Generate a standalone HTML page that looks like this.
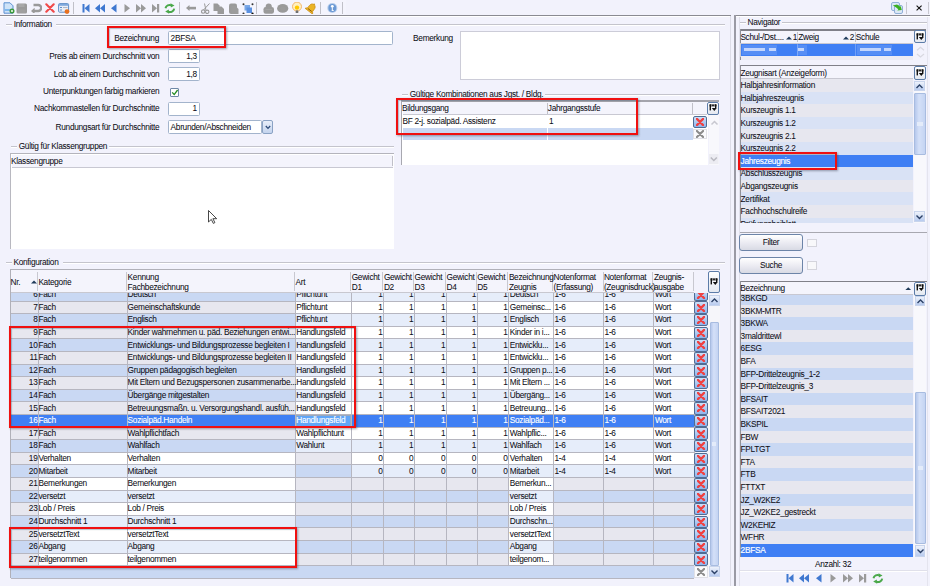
<!DOCTYPE html><html><head><meta charset="utf-8"><style>
html,body{margin:0;padding:0}body{width:930px;height:586px;overflow:hidden;position:relative;background:#f2f2fc;font-family:"Liberation Sans",sans-serif;font-size:8px;color:#0c0c14}
div,svg{position:absolute}.t{white-space:nowrap;line-height:12.6px;height:12.6px;letter-spacing:-0.3px;font-size:8.3px;-webkit-text-stroke:0.04px #141420}.w{-webkit-text-stroke:0.2px #fff}
</style></head><body>
<div style="left:0px;top:0px;width:930px;height:15px;background:#f2f2fc"></div>
<div style="left:0px;top:0px;width:346px;height:14.5px;background:#f4f4fd"></div>
<svg style="position:absolute;left:2.5px;top:2px" width="12" height="12" viewBox="0 0 12 12"><path d="M1 .8h6l3 3v7.4H1z" fill="#cfe3f8" stroke="#5b8fd0" stroke-width="1"/><rect x="1.5" y="7" width="8" height="2" fill="#7fb8ee"/><circle cx="9" cy="9" r="2.5" fill="#3c9a3c"/><circle cx="9" cy="9" r="1.1" fill="#e8f8e8"/></svg>
<svg style="position:absolute;left:16px;top:2.5px" width="12" height="11" viewBox="0 0 12 11"><rect x=".5" y=".5" width="10.5" height="10" rx="1.5" fill="#9a9a9a"/><rect x="2.5" y="1" width="6" height="3" fill="#a8a8a8"/><rect x="2" y="6.5" width="7.5" height="3.5" fill="#a0a0a0"/></svg>
<svg style="position:absolute;left:31px;top:3px" width="11" height="10" viewBox="0 0 11 10"><path d="M3 8h4.2a3 3 0 0 0 0-6H2.5" fill="none" stroke="#9a9a9a" stroke-width="2.4"/><path d="M0 8l3.6-3.2v6.4z" fill="#9a9a9a"/></svg>
<svg style="position:absolute;left:45px;top:3px" width="10" height="10" viewBox="0 0 10 10"><path d="M1.3 1.3l7.4 7.4M8.7 1.3l-7.4 7.4" stroke="#f04a4a" stroke-width="2.1" stroke-linecap="round"/></svg>
<svg style="position:absolute;left:58px;top:3px" width="12" height="11" viewBox="0 0 12 11"><rect x=".6" y=".6" width="10" height="8.6" rx="1" fill="#e8eef8" stroke="#5f8fc8" stroke-width="1"/><rect x="1" y="1" width="9.4" height="1.8" fill="#7fa8dc"/><rect x="2" y="4" width="2" height="1" fill="#5f8fc8"/><rect x="2" y="6.5" width="2" height="1" fill="#5f8fc8"/><rect x="5" y="4" width="4.5" height="1" fill="#b0b8c8"/><circle cx="9" cy="8.6" r="2.4" fill="#e8701e"/></svg>
<div style="left:73.2px;top:2px;width:1px;height:11.5px;background:#c0c0c8"></div>
<svg style="position:absolute;left:81.5px;top:3.5px" width="8" height="9" viewBox="0 0 8 9"><rect x=".5" y="0" width="2" height="8.5" fill="#3f78d0"/><path d="M7.5 0v8.5L2.5 4.25z" fill="#3f78d0"/></svg>
<svg style="position:absolute;left:94.5px;top:3.5px" width="10.5" height="9" viewBox="0 0 10.5 9"><path d="M5 0v8.5L0 4.25z M10 0v8.5L5 4.25z" fill="#3f78d0"/></svg>
<svg style="position:absolute;left:110.5px;top:3.5px" width="6" height="9" viewBox="0 0 6 9"><path d="M5.5 0v8.5L0 4.25z" fill="#3f78d0"/></svg>
<svg style="position:absolute;left:124px;top:3.5px" width="6.5" height="9" viewBox="0 0 6.5 9"><path d="M.5 0v8.5L6 4.25z" fill="#9a9a9a"/></svg>
<svg style="position:absolute;left:136px;top:3.5px" width="10.5" height="9" viewBox="0 0 10.5 9"><path d="M0 0v8.5L5 4.25z M5 0v8.5l5-4.25z" fill="#9a9a9a"/></svg>
<svg style="position:absolute;left:151.5px;top:3.5px" width="8" height="9" viewBox="0 0 8 9"><path d="M0 0v8.5L5 4.25z" fill="#9a9a9a"/><rect x="5" y="0" width="2.2" height="8.5" fill="#9a9a9a"/></svg>
<svg style="position:absolute;left:163.5px;top:2.5px" width="12" height="11" viewBox="0 0 12 11"><path d="M1.5 5.2C2 2.5 5 1.2 7.5 2.4" fill="none" stroke="#4aa84a" stroke-width="2"/><path d="M6.5 0.2l4 2.2-3.6 2z" fill="#4aa84a"/><path d="M10.2 5.6C9.8 8.4 6.8 9.8 4.2 8.6" fill="none" stroke="#4aa84a" stroke-width="2"/><path d="M5.2 10.8l-4-2.2 3.6-2z" fill="#4aa84a"/></svg>
<div style="left:178.5px;top:2px;width:1px;height:11.5px;background:#c0c0c8"></div>
<svg style="position:absolute;left:186px;top:4.5px" width="10" height="6" viewBox="0 0 10 6"><path d="M0 3l3.5-3v6z" fill="#9a9a9a"/><rect x="3" y="1.8" width="7" height="2.6" fill="#9a9a9a"/></svg>
<svg style="position:absolute;left:200.5px;top:2.5px" width="9.5" height="11" viewBox="0 0 9.5 11"><path d="M2.5 7L8.5.5M5 7.5L3.5 .5" stroke="#9a9a9a" stroke-width="1" fill="none"/><circle cx="2.2" cy="8.6" r="1.7" fill="none" stroke="#9a9a9a" stroke-width="1.1"/><circle cx="6.2" cy="8.8" r="1.7" fill="none" stroke="#9a9a9a" stroke-width="1.1"/></svg>
<svg style="position:absolute;left:213px;top:2.5px" width="12" height="11.5" viewBox="0 0 12 11.5"><path d="M.5 .5h4l2 2V8H.5z" fill="#9a9a9a"/><path d="M4.5 3.5h4l2.5 2.5v5H4.5z" fill="#9a9a9a"/></svg>
<svg style="position:absolute;left:227.5px;top:2.5px" width="11.5" height="11.5" viewBox="0 0 11.5 11.5"><rect x="1" y="0.5" width="8" height="10.5" rx="2" fill="#9a9a9a"/><path d="M3.5 3h4l3 3v5h-7z" fill="#9c9c9c"/></svg>
<svg style="position:absolute;left:241.5px;top:2.5px" width="12" height="11.5" viewBox="0 0 12 11.5"><rect x="2.5" y="2" width="5.5" height="5.5" fill="#7aa8e8"/><rect x="4.5" y="4.5" width="5.5" height="5.5" fill="#5a90e0"/><circle cx="1.5" cy="1.2" r="1" fill="#333"/><circle cx="10.5" cy="1.2" r="1" fill="#333"/><circle cx="1.5" cy="10.5" r="1" fill="#333"/><circle cx="10.5" cy="10.5" r="1.1" fill="#111"/></svg>
<div style="left:256.3px;top:2px;width:1px;height:11.5px;background:#c0c0c8"></div>
<svg style="position:absolute;left:263px;top:2.5px" width="11.5" height="11.5" viewBox="0 0 11.5 11.5"><path d="M2.6 4.2C2.6 1.2 3.8.4 5.7.4s3.2.8 3.2 3.8z" fill="#9a9a9a"/><rect x=".5" y="4" width="10.5" height="6.8" rx="2.2" fill="#9a9a9a"/><rect x="2.5" y="6" width="6.5" height="1" fill="#a4a4a4"/></svg>
<svg style="position:absolute;left:277px;top:3.5px" width="12" height="9.5" viewBox="0 0 12 9.5"><ellipse cx="5.7" cy="4.4" rx="5.6" ry="4.3" fill="#9a9a9a"/><ellipse cx="5.7" cy="4.4" rx="2.6" ry="2" fill="#9c9c9c"/></svg>
<svg style="position:absolute;left:291.5px;top:2px" width="11" height="11.5" viewBox="0 0 11 11.5"><circle cx="5" cy="4.6" r="4.5" fill="#fff0c0" stroke="#f2b060" stroke-width=".9"/><circle cx="5" cy="5.6" r="2.2" fill="#ffc800"/><rect x="3.7" y="8.4" width="2.6" height="2.6" fill="#707070"/></svg>
<svg style="position:absolute;left:304.5px;top:1.5px" width="12" height="12.5" viewBox="0 0 12 12.5"><g transform="rotate(38 6 6.5)"><path d="M6 1.6c-2.1 0-3.1 1.7-3.1 3.8v2.5L1.2 10h9.6L9.1 7.9V5.4c0-2.1-1-3.8-3.1-3.8z" fill="#ebb424" stroke="#c98c12" stroke-width=".7"/><circle cx="6" cy="1.3" r=".9" fill="#d9a020"/><path d="M3.6 8.4h4.8" stroke="#8a5a10" stroke-width=".9"/></g></svg>
<div style="left:320.1px;top:2px;width:1px;height:11.5px;background:#c0c0c8"></div>
<svg style="position:absolute;left:327px;top:3px" width="11" height="10.5" viewBox="0 0 11 10.5"><circle cx="5.3" cy="5" r="5" fill="#b4cbea"/><circle cx="5.3" cy="5" r="3.9" fill="#6a98d4"/><circle cx="5.3" cy="3.3" r="1.4" fill="#fff"/><rect x="4.8" y="4.3" width="1" height="3.6" fill="#fff"/><rect x="4.8" y="7" width="2" height=".8" fill="#fff"/></svg>
<div style="left:341.6px;top:2px;width:1px;height:11.5px;background:#c0c0c8"></div>
<svg style="position:absolute;left:891px;top:2px" width="12.5" height="12" viewBox="0 0 12.5 12"><rect x=".5" y=".5" width="8" height="8" rx="1.5" fill="#dce8f6" stroke="#90b0d8" stroke-width="1"/><rect x="3.5" y="3.5" width="8" height="8" rx="1.5" fill="#dce8f6" stroke="#90b0d8" stroke-width="1"/><path d="M1.8 3.6l4.2-1.2 3.4 2.4.2-1.4 1.2 4.6-4.6.6 1.2-1C5.8 5.6 3.8 4.8 1.8 3.6z" fill="#3ab020"/></svg>
<div style="left:906px;top:2px;width:1px;height:11.5px;background:#c8c8d0"></div>
<svg style="position:absolute;left:915.5px;top:4.8px" width="6.5" height="6" viewBox="0 0 6.5 6"><path d="M.6.6l5 4.8M5.6.6l-5 4.8" stroke="#111" stroke-width="1.1"/></svg>
<div style="left:928px;top:2px;width:1px;height:11.5px;background:#c8c8d0"></div>
<div style="left:0px;top:14.8px;width:731px;height:1.2px;background:#8a8a92"></div>
<div style="left:0px;top:16px;width:731px;height:1px;background:#ffffff"></div>
<div style="left:735px;top:14.8px;width:195px;height:1.2px;background:#8a8a92"></div>
<div style="left:735px;top:16px;width:195px;height:1px;background:#ffffff"></div>
<div style="left:729.5px;top:16px;width:1px;height:570px;background:#dcdce6"></div>
<div style="left:734.4px;top:14.8px;width:1.5px;height:571.2px;background:#9a9aa4"></div>
<div style="left:738.6px;top:17px;width:1px;height:569px;background:#e0e0ea"></div>
<div style="left:6px;top:24.2px;width:6.2px;height:1px;background:#c4c4cc"></div>
<div style="left:6px;top:25.2px;width:6.2px;height:1px;background:#ffffff"></div>
<div style="left:56px;top:24.2px;width:669px;height:1px;background:#c4c4cc"></div>
<div style="left:56px;top:25.2px;width:669px;height:1px;background:#ffffff"></div>
<div class="t" style="left:13.7px;top:18.2px;">Information</div>
<div class="t" style="right:771px;top:32.1px;text-align:right;">Bezeichnung</div>
<div style="left:168px;top:31.2px;width:225.3px;height:13.6px;background:#fff;border:1px solid #a3b4cc;box-sizing:border-box;border-radius:1.5px"></div>
<div class="t" style="left:170.6px;top:31.9px;">2BFSA</div>
<div class="t" style="right:770.6px;top:50.2px;text-align:right;">Preis ab einem Durchschnitt von</div>
<div style="left:168.2px;top:49.4px;width:31.6px;height:13.4px;background:#fff;border:1px solid #a3b4cc;box-sizing:border-box;border-radius:1.5px"></div>
<div class="t" style="right:733.2px;top:50px;text-align:right;">1,3</div>
<div class="t" style="right:770.6px;top:68.1px;text-align:right;">Lob ab einem Durchschnitt von</div>
<div style="left:168.2px;top:67.2px;width:31.6px;height:14px;background:#fff;border:1px solid #a3b4cc;box-sizing:border-box;border-radius:1.5px"></div>
<div class="t" style="right:733.2px;top:68.1px;text-align:right;">1,8</div>
<div class="t" style="right:770.6px;top:85.3px;text-align:right;">Unterpunktungen farbig markieren</div>
<div style="left:170px;top:87.5px;width:9.2px;height:9px;background:#fff;border:1px solid #6f88a8;box-sizing:border-box;border-radius:1px"></div>
<svg style="position:absolute;left:171px;top:88.5px" width="7.5" height="7" viewBox="0 0 7.5 7"><path d="M1.2 3.4l2 2.2 3.4-4.6" fill="none" stroke="#1f8a1f" stroke-width="1.3"/></svg>
<div class="t" style="right:770.6px;top:102.4px;text-align:right;">Nachkommastellen für Durchschnitte</div>
<div style="left:168.2px;top:101.5px;width:31.6px;height:14px;background:#fff;border:1px solid #a3b4cc;box-sizing:border-box;border-radius:1.5px"></div>
<div class="t" style="right:733.2px;top:102.4px;text-align:right;">1</div>
<div class="t" style="right:770.6px;top:120.5px;text-align:right;">Rundungsart für Durchschnitte</div>
<div style="left:168px;top:119.9px;width:94.4px;height:14.3px;background:#fff;border:1px solid #a3b4cc;box-sizing:border-box;border-radius:1.5px"></div>
<div class="t" style="left:170.6px;top:120.95px;">Abrunden/Abschneiden</div>
<div style="left:262.2px;top:120px;width:10.4px;height:14px;background:linear-gradient(#e8eef9,#c4d4ee);border:1px solid #8aa2c4;box-sizing:border-box;border-radius:2px"></div>
<svg style="position:absolute;left:264.6px;top:124.6px" width="6" height="5" viewBox="0 0 6 5"><path d="M.8 1l2.2 2.4L5.2 1" fill="none" stroke="#2c4a78" stroke-width="1.3"/></svg>
<div style="left:106.8px;top:25.6px;width:118.8px;height:22.4px;border:2px solid #f01010;box-sizing:border-box;box-shadow:1px 1px 2px rgba(60,60,80,.45), inset 1px 1px 1px rgba(60,90,110,.35)"></div>
<div class="t" style="left:413.1px;top:32.2px;">Bemerkung</div>
<div style="left:459.6px;top:31px;width:260px;height:48.8px;background:#fff;border:1px solid #ccccd8;box-sizing:border-box"></div>
<div style="left:401.9px;top:94.2px;width:6.3px;height:1px;background:#c4c4cc"></div>
<div style="left:401.9px;top:95.2px;width:6.3px;height:1px;background:#ffffff"></div>
<div style="left:545.3px;top:94.2px;width:174.5px;height:1px;background:#c4c4cc"></div>
<div style="left:545.3px;top:95.2px;width:174.5px;height:1px;background:#ffffff"></div>
<div class="t" style="left:409.7px;top:88.2px;">Gültige Kombinationen aus Jgst. / Bldg.</div>
<div style="left:401px;top:100.5px;width:307px;height:64.3px;background:#fff"></div>
<div style="left:401px;top:100.4px;width:317.5px;height:1.2px;background:#a4a4ac"></div>
<div style="left:401px;top:100.5px;width:1.3px;height:64.3px;background:#a8a8b0"></div>
<div style="left:402.5px;top:101.8px;width:304.5px;height:12.6px;background:#f4f4fc"></div>
<div style="left:402.5px;top:114px;width:304.5px;height:1px;background:#c8c8d2"></div>
<div style="left:546.6px;top:103px;width:1px;height:10.5px;background:#c0c0c8"></div>
<div style="left:692.3px;top:103px;width:1px;height:10.5px;background:#c0c0c8"></div>
<div class="t" style="left:402px;top:102.4px;">Bildungsgang</div>
<div class="t" style="left:547.8px;top:102.4px;">Jahrgangsstufe</div>
<div class="t" style="left:402.5px;top:115.3px;">BF 2-j. sozialpäd. Assistenz</div>
<div class="t" style="left:549px;top:115.3px;">1</div>
<div style="left:402.5px;top:128.1px;width:290.5px;height:11.9px;background:#c9d8f3"></div>
<div style="left:546.6px;top:128.1px;width:1px;height:11.9px;background:#ffffff"></div>
<div style="left:708.6px;top:115px;width:10.9px;height:49.8px;background:#f8f8fc"></div>
<svg style="position:absolute;left:709.5px;top:118.7px" width="9" height="8" viewBox="0 0 9 8"><path d="M1.5 5.5l3-3 3 3" fill="none" stroke="#c8c8d0" stroke-width="1.5"/></svg>
<svg style="position:absolute;left:709px;top:153.5px" width="9.5" height="10" viewBox="0 0 9.5 10"><rect x="0" y="0" width="9.5" height="10" fill="#ececf2"/><path d="M1.8 3.5l3 3 3-3" fill="none" stroke="#b8b8c0" stroke-width="1.5"/></svg>
<div style="left:707.3px;top:101.8px;width:11.6px;height:13.2px;background:linear-gradient(#ffffff,#e4e8f0);border:1.2px solid #5c7ca8;box-sizing:border-box;border-radius:2px"></div>
<svg style="position:absolute;left:709.1px;top:104.1px" width="8" height="8" viewBox="0 0 8 8"><rect x=".6" y=".4" width="6.8" height="2" fill="#111"/><rect x="2.5" y=".4" width=".6" height="2" fill="#eee"/><rect x="4.9" y=".4" width=".6" height="2" fill="#eee"/><rect x=".6" y=".4" width="1.4" height="6" fill="#111"/><rect x="6" y=".4" width="1.4" height="3.6" fill="#111"/><path d="M2.8 4h5L5.3 7z" fill="#111"/></svg>
<div style="left:693.3px;top:115.6px;width:13.5px;height:12px;background:linear-gradient(#cfe0f8,#8eb4ec);border:1.2px solid #4f6c94;box-sizing:border-box;border-radius:2px"></div>
<svg style="position:absolute;left:696.05px;top:117.6px" width="8" height="8" viewBox="0 0 8 8"><path d="M.9 .9l6.2 6.2M7.1 .9l-6.2 6.2" stroke="#f04040" stroke-width="2.2" stroke-linecap="round"/></svg>
<div style="left:693.3px;top:128.6px;width:13.5px;height:10.8px;background:#fbfbfd;border:1px solid #e0e0e6;box-sizing:border-box"></div>
<svg style="position:absolute;left:696.05px;top:130px" width="8" height="8" viewBox="0 0 8 8"><path d="M.9 .9l6.2 6.2M7.1 .9l-6.2 6.2" stroke="#8c8c8c" stroke-width="2.1" stroke-linecap="round"/></svg>
<div style="left:396.3px;top:97.5px;width:241.5px;height:37.4px;border:2px solid #f01010;box-sizing:border-box;box-shadow:1px 1px 2px rgba(60,60,80,.45), inset 1px 1px 1px rgba(60,90,110,.35)"></div>
<div style="left:11px;top:146.4px;width:6.2px;height:1px;background:#c4c4cc"></div>
<div style="left:11px;top:147.4px;width:6.2px;height:1px;background:#ffffff"></div>
<div style="left:108.5px;top:146.4px;width:285px;height:1px;background:#c4c4cc"></div>
<div style="left:108.5px;top:147.4px;width:285px;height:1px;background:#ffffff"></div>
<div class="t" style="left:18.7px;top:140.4px;">Gültig für Klassengruppen</div>
<div style="left:10.5px;top:153.4px;width:383px;height:95.4px;background:#fff"></div>
<div style="left:10.5px;top:153.2px;width:383px;height:1px;background:#b4b4bc"></div>
<div style="left:10.3px;top:153.2px;width:1px;height:95.6px;background:#b8b8c0"></div>
<div style="left:11.8px;top:154.6px;width:381.7px;height:12.6px;background:#f4f4fc"></div>
<div style="left:11.8px;top:166.8px;width:381.7px;height:1px;background:#c8c8d2"></div>
<div style="left:391.8px;top:156px;width:1px;height:10px;background:#c0c0c8"></div>
<div class="t" style="left:11px;top:154.7px;">Klassengruppe</div>
<svg style="position:absolute;left:207.5px;top:209.5px" width="9" height="14" viewBox="0 0 9 14"><path d="M.5 .5v11.5l2.8-2.6 2 4 1.6-.8-2-3.9h3.8z" fill="#fff" stroke="#333" stroke-width=".9"/></svg>
<div style="left:6px;top:262.2px;width:6px;height:1px;background:#c4c4cc"></div>
<div style="left:6px;top:263.2px;width:6px;height:1px;background:#ffffff"></div>
<div style="left:63px;top:262.2px;width:662px;height:1px;background:#c4c4cc"></div>
<div style="left:63px;top:263.2px;width:662px;height:1px;background:#ffffff"></div>
<div class="t" style="left:13.5px;top:256.2px;">Konfiguration</div>
<div style="left:10px;top:269.1px;width:698px;height:308.5px;background:#f2f2fc"></div>
<div style="left:10px;top:269.1px;width:709.5px;height:1px;background:#b0b0b8"></div>
<div style="left:10px;top:269.1px;width:1px;height:308.5px;background:#b0b0b8"></div>
<div style="left:11px;top:270.1px;width:682.6px;height:22.6px;background:#f4f4fc"></div>
<div style="left:11px;top:292.2px;width:682.6px;height:1px;background:#c8c8d0"></div>
<div style="left:37.1px;top:272.1px;width:1px;height:19.1px;background:#c8c8d0"></div>
<div style="left:126.3px;top:272.1px;width:1px;height:19.1px;background:#c8c8d0"></div>
<div style="left:294.1px;top:272.1px;width:1px;height:19.1px;background:#c8c8d0"></div>
<div style="left:350.2px;top:272.1px;width:1px;height:19.1px;background:#c8c8d0"></div>
<div style="left:382.4px;top:272.1px;width:1px;height:19.1px;background:#c8c8d0"></div>
<div style="left:413px;top:272.1px;width:1px;height:19.1px;background:#c8c8d0"></div>
<div style="left:445.1px;top:272.1px;width:1px;height:19.1px;background:#c8c8d0"></div>
<div style="left:475.8px;top:272.1px;width:1px;height:19.1px;background:#c8c8d0"></div>
<div style="left:507.4px;top:272.1px;width:1px;height:19.1px;background:#c8c8d0"></div>
<div style="left:552.2px;top:272.1px;width:1px;height:19.1px;background:#c8c8d0"></div>
<div style="left:602.7px;top:272.1px;width:1px;height:19.1px;background:#c8c8d0"></div>
<div style="left:652.4px;top:272.1px;width:1px;height:19.1px;background:#c8c8d0"></div>
<div style="left:692.8px;top:272.1px;width:1px;height:19.1px;background:#c8c8d0"></div>
<div class="t" style="left:10.6px;top:275.7px;">Nr.</div>
<svg style="position:absolute;left:31px;top:280.2px" width="6" height="4" viewBox="0 0 6 4"><path d="M0 3.6L3 .4 6 3.6z" fill="#1f3b5a"/></svg>
<div class="t" style="left:38.4px;top:275.7px;">Kategorie</div>
<div class="t" style="left:127.6px;top:270.7px;">Kennung</div>
<div class="t" style="left:127.6px;top:280.7px;">Fachbezeichnung</div>
<div class="t" style="left:295.6px;top:275.7px;">Art</div>
<div class="t" style="left:351.7px;top:270.7px;">Gewicht</div>
<div class="t" style="left:351.7px;top:280.7px;">D1</div>
<div class="t" style="left:383.9px;top:270.7px;">Gewicht</div>
<div class="t" style="left:383.9px;top:280.7px;">D2</div>
<div class="t" style="left:414.5px;top:270.7px;">Gewicht</div>
<div class="t" style="left:414.5px;top:280.7px;">D3</div>
<div class="t" style="left:446.6px;top:270.7px;">Gewicht</div>
<div class="t" style="left:446.6px;top:280.7px;">D4</div>
<div class="t" style="left:477.3px;top:270.7px;">Gewicht</div>
<div class="t" style="left:477.3px;top:280.7px;">D5</div>
<div class="t" style="left:508.9px;top:270.7px;">Bezeichnung</div>
<div class="t" style="left:508.9px;top:280.7px;">Zeugnis</div>
<div class="t" style="left:553.5px;top:270.7px;">Notenformat</div>
<div class="t" style="left:553.5px;top:280.7px;">(Erfassung)</div>
<div class="t" style="left:603.9px;top:270.7px;">Notenformat</div>
<div class="t" style="left:603.9px;top:280.7px;">(Zeugnisdruck)</div>
<div class="t" style="left:654px;top:270.7px;">Zeugnis-</div>
<div class="t" style="left:654px;top:280.7px;">ausgabe</div>
<div style="left:708.2px;top:270.5px;width:11.4px;height:22.7px;background:linear-gradient(#ffffff,#e4e8f0);border:1.2px solid #5c7ca8;box-sizing:border-box;border-radius:2px"></div>
<svg style="position:absolute;left:709.9px;top:277.55px" width="8" height="8" viewBox="0 0 8 8"><rect x=".6" y=".4" width="6.8" height="2" fill="#111"/><rect x="2.5" y=".4" width=".6" height="2" fill="#eee"/><rect x="4.9" y=".4" width=".6" height="2" fill="#eee"/><rect x=".6" y=".4" width="1.4" height="6" fill="#111"/><rect x="6" y=".4" width="1.4" height="3.6" fill="#111"/><path d="M2.8 4h5L5.3 7z" fill="#111"/></svg>
<div style="left:0;top:293.2px;width:930px;height:285.7px;overflow:hidden">
<div style="left:11px;top:-5.2px;width:284.3px;height:12.6px;background:#c9d8f3"></div>
<div style="left:295.3px;top:-5.2px;width:398.7px;height:12.6px;background:#e6edfa"></div>
<div style="left:11px;top:7.4px;width:284.3px;height:12.6px;background:#e7e7ef"></div>
<div style="left:295.3px;top:7.4px;width:398.7px;height:12.6px;background:#ffffff"></div>
<div style="left:11px;top:20px;width:284.3px;height:12.6px;background:#c9d8f3"></div>
<div style="left:295.3px;top:20px;width:398.7px;height:12.6px;background:#e6edfa"></div>
<div style="left:11px;top:32.6px;width:284.3px;height:12.6px;background:#e7e7ef"></div>
<div style="left:295.3px;top:32.6px;width:398.7px;height:12.6px;background:#ffffff"></div>
<div style="left:11px;top:45.2px;width:284.3px;height:12.6px;background:#c9d8f3"></div>
<div style="left:295.3px;top:45.2px;width:398.7px;height:12.6px;background:#e6edfa"></div>
<div style="left:11px;top:57.8px;width:284.3px;height:12.6px;background:#e7e7ef"></div>
<div style="left:295.3px;top:57.8px;width:398.7px;height:12.6px;background:#ffffff"></div>
<div style="left:11px;top:70.4px;width:284.3px;height:12.6px;background:#c9d8f3"></div>
<div style="left:295.3px;top:70.4px;width:398.7px;height:12.6px;background:#e6edfa"></div>
<div style="left:11px;top:83px;width:284.3px;height:12.6px;background:#e7e7ef"></div>
<div style="left:295.3px;top:83px;width:398.7px;height:12.6px;background:#ffffff"></div>
<div style="left:11px;top:95.6px;width:284.3px;height:12.6px;background:#c9d8f3"></div>
<div style="left:295.3px;top:95.6px;width:398.7px;height:12.6px;background:#e6edfa"></div>
<div style="left:11px;top:108.2px;width:284.3px;height:12.6px;background:#e7e7ef"></div>
<div style="left:295.3px;top:108.2px;width:398.7px;height:12.6px;background:#ffffff"></div>
<div style="left:11px;top:120.8px;width:683px;height:12.6px;background:#3f7ff4"></div>
<div style="left:11px;top:133.4px;width:284.3px;height:12.6px;background:#e7e7ef"></div>
<div style="left:295.3px;top:133.4px;width:398.7px;height:12.6px;background:#ffffff"></div>
<div style="left:11px;top:146px;width:284.3px;height:12.6px;background:#c9d8f3"></div>
<div style="left:295.3px;top:146px;width:398.7px;height:12.6px;background:#e6edfa"></div>
<div style="left:11px;top:158.6px;width:27.3px;height:12.6px;background:#e7e7ef"></div>
<div style="left:38.3px;top:158.6px;width:257px;height:12.6px;background:#ffffff"></div>
<div style="left:295.3px;top:158.6px;width:56.1px;height:12.6px;background:#e7e7ef"></div>
<div style="left:351.4px;top:158.6px;width:342.6px;height:12.6px;background:#ffffff"></div>
<div style="left:11px;top:171.2px;width:27.3px;height:12.6px;background:#c9d8f3"></div>
<div style="left:38.3px;top:171.2px;width:257px;height:12.6px;background:#e6edfa"></div>
<div style="left:295.3px;top:171.2px;width:56.1px;height:12.6px;background:#c9d8f3"></div>
<div style="left:351.4px;top:171.2px;width:342.6px;height:12.6px;background:#e6edfa"></div>
<div style="left:11px;top:183.8px;width:27.3px;height:12.6px;background:#e7e7ef"></div>
<div style="left:38.3px;top:183.8px;width:257px;height:12.6px;background:#ffffff"></div>
<div style="left:295.3px;top:183.8px;width:213.3px;height:12.6px;background:#e7e7ef"></div>
<div style="left:508.6px;top:183.8px;width:44.8px;height:12.6px;background:#ffffff"></div>
<div style="left:553.4px;top:183.8px;width:140.6px;height:12.6px;background:#e7e7ef"></div>
<div style="left:11px;top:196.4px;width:27.3px;height:12.6px;background:#c9d8f3"></div>
<div style="left:38.3px;top:196.4px;width:257px;height:12.6px;background:#e6edfa"></div>
<div style="left:295.3px;top:196.4px;width:213.3px;height:12.6px;background:#c9d8f3"></div>
<div style="left:508.6px;top:196.4px;width:44.8px;height:12.6px;background:#e6edfa"></div>
<div style="left:553.4px;top:196.4px;width:140.6px;height:12.6px;background:#c9d8f3"></div>
<div style="left:11px;top:209px;width:27.3px;height:12.6px;background:#e7e7ef"></div>
<div style="left:38.3px;top:209px;width:257px;height:12.6px;background:#ffffff"></div>
<div style="left:295.3px;top:209px;width:213.3px;height:12.6px;background:#e7e7ef"></div>
<div style="left:508.6px;top:209px;width:44.8px;height:12.6px;background:#ffffff"></div>
<div style="left:553.4px;top:209px;width:140.6px;height:12.6px;background:#e7e7ef"></div>
<div style="left:11px;top:221.6px;width:27.3px;height:12.6px;background:#c9d8f3"></div>
<div style="left:38.3px;top:221.6px;width:257px;height:12.6px;background:#e6edfa"></div>
<div style="left:295.3px;top:221.6px;width:213.3px;height:12.6px;background:#c9d8f3"></div>
<div style="left:508.6px;top:221.6px;width:44.8px;height:12.6px;background:#e6edfa"></div>
<div style="left:553.4px;top:221.6px;width:140.6px;height:12.6px;background:#c9d8f3"></div>
<div style="left:11px;top:234.2px;width:27.3px;height:12.6px;background:#e7e7ef"></div>
<div style="left:38.3px;top:234.2px;width:257px;height:12.6px;background:#ffffff"></div>
<div style="left:295.3px;top:234.2px;width:213.3px;height:12.6px;background:#e7e7ef"></div>
<div style="left:508.6px;top:234.2px;width:44.8px;height:12.6px;background:#ffffff"></div>
<div style="left:553.4px;top:234.2px;width:140.6px;height:12.6px;background:#e7e7ef"></div>
<div style="left:11px;top:246.8px;width:27.3px;height:12.6px;background:#c9d8f3"></div>
<div style="left:38.3px;top:246.8px;width:257px;height:12.6px;background:#e6edfa"></div>
<div style="left:295.3px;top:246.8px;width:213.3px;height:12.6px;background:#c9d8f3"></div>
<div style="left:508.6px;top:246.8px;width:44.8px;height:12.6px;background:#e6edfa"></div>
<div style="left:553.4px;top:246.8px;width:140.6px;height:12.6px;background:#c9d8f3"></div>
<div style="left:11px;top:259.4px;width:27.3px;height:12.6px;background:#e7e7ef"></div>
<div style="left:38.3px;top:259.4px;width:257px;height:12.6px;background:#ffffff"></div>
<div style="left:295.3px;top:259.4px;width:213.3px;height:12.6px;background:#e7e7ef"></div>
<div style="left:508.6px;top:259.4px;width:44.8px;height:12.6px;background:#ffffff"></div>
<div style="left:553.4px;top:259.4px;width:140.6px;height:12.6px;background:#e7e7ef"></div>
<div style="left:11px;top:272px;width:683px;height:12.6px;background:#c9d8f3"></div>
<div style="left:11px;top:7.4px;width:682.6px;height:1px;background:#b6b6c0"></div>
<div style="left:11px;top:20px;width:682.6px;height:1px;background:#b6b6c0"></div>
<div style="left:11px;top:32.6px;width:682.6px;height:1px;background:#b6b6c0"></div>
<div style="left:11px;top:45.2px;width:682.6px;height:1px;background:#b6b6c0"></div>
<div style="left:11px;top:57.8px;width:682.6px;height:1px;background:#b6b6c0"></div>
<div style="left:11px;top:70.4px;width:682.6px;height:1px;background:#b6b6c0"></div>
<div style="left:11px;top:83px;width:682.6px;height:1px;background:#b6b6c0"></div>
<div style="left:11px;top:95.6px;width:682.6px;height:1px;background:#b6b6c0"></div>
<div style="left:11px;top:108.2px;width:682.6px;height:1px;background:#b6b6c0"></div>
<div style="left:11px;top:120.8px;width:682.6px;height:1px;background:#b6b6c0"></div>
<div style="left:11px;top:133.4px;width:682.6px;height:1px;background:#b6b6c0"></div>
<div style="left:11px;top:146px;width:682.6px;height:1px;background:#b6b6c0"></div>
<div style="left:11px;top:158.6px;width:682.6px;height:1px;background:#b6b6c0"></div>
<div style="left:11px;top:171.2px;width:682.6px;height:1px;background:#b6b6c0"></div>
<div style="left:11px;top:183.8px;width:682.6px;height:1px;background:#b6b6c0"></div>
<div style="left:11px;top:196.4px;width:682.6px;height:1px;background:#b6b6c0"></div>
<div style="left:11px;top:209px;width:682.6px;height:1px;background:#b6b6c0"></div>
<div style="left:11px;top:221.6px;width:682.6px;height:1px;background:#b6b6c0"></div>
<div style="left:11px;top:234.2px;width:682.6px;height:1px;background:#b6b6c0"></div>
<div style="left:11px;top:246.8px;width:682.6px;height:1px;background:#b6b6c0"></div>
<div style="left:11px;top:259.4px;width:682.6px;height:1px;background:#b6b6c0"></div>
<div style="left:11px;top:272px;width:682.6px;height:1px;background:#b6b6c0"></div>
<div style="left:11px;top:284.6px;width:682.6px;height:1px;background:#b6b6c0"></div>
<div style="left:37.8px;top:0px;width:1px;height:272px;background:#b6b6c0"></div>
<div style="left:127px;top:0px;width:1px;height:272px;background:#b6b6c0"></div>
<div style="left:294.8px;top:0px;width:1px;height:272px;background:#b6b6c0"></div>
<div style="left:350.9px;top:0px;width:1px;height:272px;background:#b6b6c0"></div>
<div style="left:383.1px;top:0px;width:1px;height:272px;background:#b6b6c0"></div>
<div style="left:413.7px;top:0px;width:1px;height:272px;background:#b6b6c0"></div>
<div style="left:445.8px;top:0px;width:1px;height:272px;background:#b6b6c0"></div>
<div style="left:476.5px;top:0px;width:1px;height:272px;background:#b6b6c0"></div>
<div style="left:508.1px;top:0px;width:1px;height:272px;background:#b6b6c0"></div>
<div style="left:552.9px;top:0px;width:1px;height:272px;background:#b6b6c0"></div>
<div style="left:603.4px;top:0px;width:1px;height:272px;background:#b6b6c0"></div>
<div style="left:653.1px;top:0px;width:1px;height:272px;background:#b6b6c0"></div>
<div style="left:693.5px;top:0px;width:1px;height:272px;background:#b6b6c0"></div>
<div class="t" style="right:892.5px;top:-5px;text-align:right;">6</div>
<div class="t" style="left:38.5px;top:-5px;">Fach</div>
<div class="t" style="left:127.6px;top:-5px;">Deutsch</div>
<div class="t" style="left:296.2px;top:-5px;">Pflichtunt</div>
<div class="t" style="right:547.4px;top:-5px;text-align:right;">1</div>
<div class="t" style="right:516.8px;top:-5px;text-align:right;">1</div>
<div class="t" style="right:484.7px;top:-5px;text-align:right;">1</div>
<div class="t" style="right:454px;top:-5px;text-align:right;">1</div>
<div class="t" style="right:422.4px;top:-5px;text-align:right;">1</div>
<div class="t" style="left:509.8px;top:-5px;">Deutsch</div>
<div class="t" style="left:554.4px;top:-5px;">1-6</div>
<div class="t" style="left:604.6px;top:-5px;">1-6</div>
<div class="t" style="left:654.9px;top:-5px;">Wort</div>
<div style="left:694.2px;top:-4.4px;width:13.6px;height:12.4px;background:linear-gradient(#cfe0f8,#8eb4ec);border:1.2px solid #4f6c94;box-sizing:border-box;border-radius:2px"></div>
<svg style="position:absolute;left:697px;top:-2.2px" width="8" height="8" viewBox="0 0 8 8"><path d="M.9 .9l6.2 6.2M7.1 .9l-6.2 6.2" stroke="#f04040" stroke-width="2.2" stroke-linecap="round"/></svg>
<div class="t" style="right:892.5px;top:7.6px;text-align:right;">7</div>
<div class="t" style="left:38.5px;top:7.6px;">Fach</div>
<div class="t" style="left:127.6px;top:7.6px;">Gemeinschaftskunde</div>
<div class="t" style="left:296.2px;top:7.6px;">Pflichtunt</div>
<div class="t" style="right:547.4px;top:7.6px;text-align:right;">1</div>
<div class="t" style="right:516.8px;top:7.6px;text-align:right;">1</div>
<div class="t" style="right:484.7px;top:7.6px;text-align:right;">1</div>
<div class="t" style="right:454px;top:7.6px;text-align:right;">1</div>
<div class="t" style="right:422.4px;top:7.6px;text-align:right;">1</div>
<div class="t" style="left:509.8px;top:7.6px;">Gemeinsc...</div>
<div class="t" style="left:554.4px;top:7.6px;">1-6</div>
<div class="t" style="left:604.6px;top:7.6px;">1-6</div>
<div class="t" style="left:654.9px;top:7.6px;">Wort</div>
<div style="left:694.2px;top:8.2px;width:13.6px;height:12.4px;background:linear-gradient(#cfe0f8,#8eb4ec);border:1.2px solid #4f6c94;box-sizing:border-box;border-radius:2px"></div>
<svg style="position:absolute;left:697px;top:10.4px" width="8" height="8" viewBox="0 0 8 8"><path d="M.9 .9l6.2 6.2M7.1 .9l-6.2 6.2" stroke="#f04040" stroke-width="2.2" stroke-linecap="round"/></svg>
<div class="t" style="right:892.5px;top:20.2px;text-align:right;">8</div>
<div class="t" style="left:38.5px;top:20.2px;">Fach</div>
<div class="t" style="left:127.6px;top:20.2px;">Englisch</div>
<div class="t" style="left:296.2px;top:20.2px;">Pflichtunt</div>
<div class="t" style="right:547.4px;top:20.2px;text-align:right;">1</div>
<div class="t" style="right:516.8px;top:20.2px;text-align:right;">1</div>
<div class="t" style="right:484.7px;top:20.2px;text-align:right;">1</div>
<div class="t" style="right:454px;top:20.2px;text-align:right;">1</div>
<div class="t" style="right:422.4px;top:20.2px;text-align:right;">1</div>
<div class="t" style="left:509.8px;top:20.2px;">Englisch</div>
<div class="t" style="left:554.4px;top:20.2px;">1-6</div>
<div class="t" style="left:604.6px;top:20.2px;">1-6</div>
<div class="t" style="left:654.9px;top:20.2px;">Wort</div>
<div style="left:694.2px;top:20.8px;width:13.6px;height:12.4px;background:linear-gradient(#cfe0f8,#8eb4ec);border:1.2px solid #4f6c94;box-sizing:border-box;border-radius:2px"></div>
<svg style="position:absolute;left:697px;top:23px" width="8" height="8" viewBox="0 0 8 8"><path d="M.9 .9l6.2 6.2M7.1 .9l-6.2 6.2" stroke="#f04040" stroke-width="2.2" stroke-linecap="round"/></svg>
<div class="t" style="right:892.5px;top:32.8px;text-align:right;">9</div>
<div class="t" style="left:38.5px;top:32.8px;">Fach</div>
<div class="t" style="left:127.6px;top:32.8px;">Kinder wahrnehmen u. päd. Beziehungen entwi...</div>
<div class="t" style="left:296.2px;top:32.8px;">Handlungsfeld</div>
<div class="t" style="right:547.4px;top:32.8px;text-align:right;">1</div>
<div class="t" style="right:516.8px;top:32.8px;text-align:right;">1</div>
<div class="t" style="right:484.7px;top:32.8px;text-align:right;">1</div>
<div class="t" style="right:454px;top:32.8px;text-align:right;">1</div>
<div class="t" style="right:422.4px;top:32.8px;text-align:right;">1</div>
<div class="t" style="left:509.8px;top:32.8px;">Kinder in i...</div>
<div class="t" style="left:554.4px;top:32.8px;">1-6</div>
<div class="t" style="left:604.6px;top:32.8px;">1-6</div>
<div class="t" style="left:654.9px;top:32.8px;">Wort</div>
<div style="left:694.2px;top:33.4px;width:13.6px;height:12.4px;background:linear-gradient(#cfe0f8,#8eb4ec);border:1.2px solid #4f6c94;box-sizing:border-box;border-radius:2px"></div>
<svg style="position:absolute;left:697px;top:35.6px" width="8" height="8" viewBox="0 0 8 8"><path d="M.9 .9l6.2 6.2M7.1 .9l-6.2 6.2" stroke="#f04040" stroke-width="2.2" stroke-linecap="round"/></svg>
<div class="t" style="right:892.5px;top:45.4px;text-align:right;">10</div>
<div class="t" style="left:38.5px;top:45.4px;">Fach</div>
<div class="t" style="left:127.6px;top:45.4px;">Entwicklungs- und Bildungsprozesse begleiten I</div>
<div class="t" style="left:296.2px;top:45.4px;">Handlungsfeld</div>
<div class="t" style="right:547.4px;top:45.4px;text-align:right;">1</div>
<div class="t" style="right:516.8px;top:45.4px;text-align:right;">1</div>
<div class="t" style="right:484.7px;top:45.4px;text-align:right;">1</div>
<div class="t" style="right:454px;top:45.4px;text-align:right;">1</div>
<div class="t" style="right:422.4px;top:45.4px;text-align:right;">1</div>
<div class="t" style="left:509.8px;top:45.4px;">Entwicklu...</div>
<div class="t" style="left:554.4px;top:45.4px;">1-6</div>
<div class="t" style="left:604.6px;top:45.4px;">1-6</div>
<div class="t" style="left:654.9px;top:45.4px;">Wort</div>
<div style="left:694.2px;top:46px;width:13.6px;height:12.4px;background:linear-gradient(#cfe0f8,#8eb4ec);border:1.2px solid #4f6c94;box-sizing:border-box;border-radius:2px"></div>
<svg style="position:absolute;left:697px;top:48.2px" width="8" height="8" viewBox="0 0 8 8"><path d="M.9 .9l6.2 6.2M7.1 .9l-6.2 6.2" stroke="#f04040" stroke-width="2.2" stroke-linecap="round"/></svg>
<div class="t" style="right:892.5px;top:58px;text-align:right;">11</div>
<div class="t" style="left:38.5px;top:58px;">Fach</div>
<div class="t" style="left:127.6px;top:58px;">Entwicklungs- und Bildungsprozesse begleiten II</div>
<div class="t" style="left:296.2px;top:58px;">Handlungsfeld</div>
<div class="t" style="right:547.4px;top:58px;text-align:right;">1</div>
<div class="t" style="right:516.8px;top:58px;text-align:right;">1</div>
<div class="t" style="right:484.7px;top:58px;text-align:right;">1</div>
<div class="t" style="right:454px;top:58px;text-align:right;">1</div>
<div class="t" style="right:422.4px;top:58px;text-align:right;">1</div>
<div class="t" style="left:509.8px;top:58px;">Entwicklu...</div>
<div class="t" style="left:554.4px;top:58px;">1-6</div>
<div class="t" style="left:604.6px;top:58px;">1-6</div>
<div class="t" style="left:654.9px;top:58px;">Wort</div>
<div style="left:694.2px;top:58.6px;width:13.6px;height:12.4px;background:linear-gradient(#cfe0f8,#8eb4ec);border:1.2px solid #4f6c94;box-sizing:border-box;border-radius:2px"></div>
<svg style="position:absolute;left:697px;top:60.8px" width="8" height="8" viewBox="0 0 8 8"><path d="M.9 .9l6.2 6.2M7.1 .9l-6.2 6.2" stroke="#f04040" stroke-width="2.2" stroke-linecap="round"/></svg>
<div class="t" style="right:892.5px;top:70.6px;text-align:right;">12</div>
<div class="t" style="left:38.5px;top:70.6px;">Fach</div>
<div class="t" style="left:127.6px;top:70.6px;">Gruppen pädagogisch begleiten</div>
<div class="t" style="left:296.2px;top:70.6px;">Handlungsfeld</div>
<div class="t" style="right:547.4px;top:70.6px;text-align:right;">1</div>
<div class="t" style="right:516.8px;top:70.6px;text-align:right;">1</div>
<div class="t" style="right:484.7px;top:70.6px;text-align:right;">1</div>
<div class="t" style="right:454px;top:70.6px;text-align:right;">1</div>
<div class="t" style="right:422.4px;top:70.6px;text-align:right;">1</div>
<div class="t" style="left:509.8px;top:70.6px;">Gruppen p...</div>
<div class="t" style="left:554.4px;top:70.6px;">1-6</div>
<div class="t" style="left:604.6px;top:70.6px;">1-6</div>
<div class="t" style="left:654.9px;top:70.6px;">Wort</div>
<div style="left:694.2px;top:71.2px;width:13.6px;height:12.4px;background:linear-gradient(#cfe0f8,#8eb4ec);border:1.2px solid #4f6c94;box-sizing:border-box;border-radius:2px"></div>
<svg style="position:absolute;left:697px;top:73.4px" width="8" height="8" viewBox="0 0 8 8"><path d="M.9 .9l6.2 6.2M7.1 .9l-6.2 6.2" stroke="#f04040" stroke-width="2.2" stroke-linecap="round"/></svg>
<div class="t" style="right:892.5px;top:83.2px;text-align:right;">13</div>
<div class="t" style="left:38.5px;top:83.2px;">Fach</div>
<div class="t" style="left:127.6px;top:83.2px;">Mit Eltern und Bezugspersonen zusammenarbe...</div>
<div class="t" style="left:296.2px;top:83.2px;">Handlungsfeld</div>
<div class="t" style="right:547.4px;top:83.2px;text-align:right;">1</div>
<div class="t" style="right:516.8px;top:83.2px;text-align:right;">1</div>
<div class="t" style="right:484.7px;top:83.2px;text-align:right;">1</div>
<div class="t" style="right:454px;top:83.2px;text-align:right;">1</div>
<div class="t" style="right:422.4px;top:83.2px;text-align:right;">1</div>
<div class="t" style="left:509.8px;top:83.2px;">Mit Eltern ...</div>
<div class="t" style="left:554.4px;top:83.2px;">1-6</div>
<div class="t" style="left:604.6px;top:83.2px;">1-6</div>
<div class="t" style="left:654.9px;top:83.2px;">Wort</div>
<div style="left:694.2px;top:83.8px;width:13.6px;height:12.4px;background:linear-gradient(#cfe0f8,#8eb4ec);border:1.2px solid #4f6c94;box-sizing:border-box;border-radius:2px"></div>
<svg style="position:absolute;left:697px;top:86px" width="8" height="8" viewBox="0 0 8 8"><path d="M.9 .9l6.2 6.2M7.1 .9l-6.2 6.2" stroke="#f04040" stroke-width="2.2" stroke-linecap="round"/></svg>
<div class="t" style="right:892.5px;top:95.8px;text-align:right;">14</div>
<div class="t" style="left:38.5px;top:95.8px;">Fach</div>
<div class="t" style="left:127.6px;top:95.8px;">Übergänge mitgestalten</div>
<div class="t" style="left:296.2px;top:95.8px;">Handlungsfeld</div>
<div class="t" style="right:547.4px;top:95.8px;text-align:right;">1</div>
<div class="t" style="right:516.8px;top:95.8px;text-align:right;">1</div>
<div class="t" style="right:484.7px;top:95.8px;text-align:right;">1</div>
<div class="t" style="right:454px;top:95.8px;text-align:right;">1</div>
<div class="t" style="right:422.4px;top:95.8px;text-align:right;">1</div>
<div class="t" style="left:509.8px;top:95.8px;">Übergäng...</div>
<div class="t" style="left:554.4px;top:95.8px;">1-6</div>
<div class="t" style="left:604.6px;top:95.8px;">1-6</div>
<div class="t" style="left:654.9px;top:95.8px;">Wort</div>
<div style="left:694.2px;top:96.4px;width:13.6px;height:12.4px;background:linear-gradient(#cfe0f8,#8eb4ec);border:1.2px solid #4f6c94;box-sizing:border-box;border-radius:2px"></div>
<svg style="position:absolute;left:697px;top:98.6px" width="8" height="8" viewBox="0 0 8 8"><path d="M.9 .9l6.2 6.2M7.1 .9l-6.2 6.2" stroke="#f04040" stroke-width="2.2" stroke-linecap="round"/></svg>
<div class="t" style="right:892.5px;top:108.4px;text-align:right;">15</div>
<div class="t" style="left:38.5px;top:108.4px;">Fach</div>
<div class="t" style="left:127.6px;top:108.4px;">Betreuungsmaßn. u. Versorgungshandl. ausfüh...</div>
<div class="t" style="left:296.2px;top:108.4px;">Handlungsfeld</div>
<div class="t" style="right:547.4px;top:108.4px;text-align:right;">1</div>
<div class="t" style="right:516.8px;top:108.4px;text-align:right;">1</div>
<div class="t" style="right:484.7px;top:108.4px;text-align:right;">1</div>
<div class="t" style="right:454px;top:108.4px;text-align:right;">1</div>
<div class="t" style="right:422.4px;top:108.4px;text-align:right;">1</div>
<div class="t" style="left:509.8px;top:108.4px;">Betreuung...</div>
<div class="t" style="left:554.4px;top:108.4px;">1-6</div>
<div class="t" style="left:604.6px;top:108.4px;">1-6</div>
<div class="t" style="left:654.9px;top:108.4px;">Wort</div>
<div style="left:694.2px;top:109px;width:13.6px;height:12.4px;background:linear-gradient(#cfe0f8,#8eb4ec);border:1.2px solid #4f6c94;box-sizing:border-box;border-radius:2px"></div>
<svg style="position:absolute;left:697px;top:111.2px" width="8" height="8" viewBox="0 0 8 8"><path d="M.9 .9l6.2 6.2M7.1 .9l-6.2 6.2" stroke="#f04040" stroke-width="2.2" stroke-linecap="round"/></svg>
<div style="left:295.8px;top:121.8px;width:55.4px;height:11.6px;background:#60a6f8;border:1px solid #9aa8bc;box-sizing:border-box"></div>
<div class="t" style="right:892.5px;top:121px;text-align:right;color:#fff;-webkit-text-stroke:0.1px #fff">16</div>
<div class="t" style="left:38.5px;top:121px;color:#fff;-webkit-text-stroke:0.1px #fff">Fach</div>
<div class="t" style="left:127.6px;top:121px;color:#fff;-webkit-text-stroke:0.1px #fff">Sozialpäd.Handeln</div>
<div class="t" style="left:296.2px;top:121px;color:#fff;-webkit-text-stroke:0.1px #fff">Handlungsfeld</div>
<div class="t" style="right:547.4px;top:121px;text-align:right;color:#fff;-webkit-text-stroke:0.1px #fff">1</div>
<div class="t" style="right:516.8px;top:121px;text-align:right;color:#fff;-webkit-text-stroke:0.1px #fff">1</div>
<div class="t" style="right:484.7px;top:121px;text-align:right;color:#fff;-webkit-text-stroke:0.1px #fff">1</div>
<div class="t" style="right:454px;top:121px;text-align:right;color:#fff;-webkit-text-stroke:0.1px #fff">1</div>
<div class="t" style="right:422.4px;top:121px;text-align:right;color:#fff;-webkit-text-stroke:0.1px #fff">1</div>
<div class="t" style="left:509.8px;top:121px;color:#fff;-webkit-text-stroke:0.1px #fff">Sozialpäd...</div>
<div class="t" style="left:554.4px;top:121px;color:#fff;-webkit-text-stroke:0.1px #fff">1-6</div>
<div class="t" style="left:604.6px;top:121px;color:#fff;-webkit-text-stroke:0.1px #fff">1-6</div>
<div class="t" style="left:654.9px;top:121px;color:#fff;-webkit-text-stroke:0.1px #fff">Wort</div>
<div style="left:694.2px;top:121.6px;width:13.6px;height:12.4px;background:linear-gradient(#cfe0f8,#8eb4ec);border:1.2px solid #4f6c94;box-sizing:border-box;border-radius:2px"></div>
<svg style="position:absolute;left:697px;top:123.8px" width="8" height="8" viewBox="0 0 8 8"><path d="M.9 .9l6.2 6.2M7.1 .9l-6.2 6.2" stroke="#f04040" stroke-width="2.2" stroke-linecap="round"/></svg>
<div class="t" style="right:892.5px;top:133.6px;text-align:right;">17</div>
<div class="t" style="left:38.5px;top:133.6px;">Fach</div>
<div class="t" style="left:127.6px;top:133.6px;">Wahlpflichtfach</div>
<div class="t" style="left:296.2px;top:133.6px;">Wahlpflichtunt</div>
<div class="t" style="right:547.4px;top:133.6px;text-align:right;">1</div>
<div class="t" style="right:516.8px;top:133.6px;text-align:right;">1</div>
<div class="t" style="right:484.7px;top:133.6px;text-align:right;">1</div>
<div class="t" style="right:454px;top:133.6px;text-align:right;">1</div>
<div class="t" style="right:422.4px;top:133.6px;text-align:right;">1</div>
<div class="t" style="left:509.8px;top:133.6px;">Wahlpflic...</div>
<div class="t" style="left:554.4px;top:133.6px;">1-6</div>
<div class="t" style="left:604.6px;top:133.6px;">1-6</div>
<div class="t" style="left:654.9px;top:133.6px;">Wort</div>
<div style="left:694.2px;top:134.2px;width:13.6px;height:12.4px;background:linear-gradient(#cfe0f8,#8eb4ec);border:1.2px solid #4f6c94;box-sizing:border-box;border-radius:2px"></div>
<svg style="position:absolute;left:697px;top:136.4px" width="8" height="8" viewBox="0 0 8 8"><path d="M.9 .9l6.2 6.2M7.1 .9l-6.2 6.2" stroke="#f04040" stroke-width="2.2" stroke-linecap="round"/></svg>
<div class="t" style="right:892.5px;top:146.2px;text-align:right;">18</div>
<div class="t" style="left:38.5px;top:146.2px;">Fach</div>
<div class="t" style="left:127.6px;top:146.2px;">Wahlfach</div>
<div class="t" style="left:296.2px;top:146.2px;">Wahlunt</div>
<div class="t" style="right:547.4px;top:146.2px;text-align:right;">1</div>
<div class="t" style="right:516.8px;top:146.2px;text-align:right;">1</div>
<div class="t" style="right:484.7px;top:146.2px;text-align:right;">1</div>
<div class="t" style="right:454px;top:146.2px;text-align:right;">1</div>
<div class="t" style="right:422.4px;top:146.2px;text-align:right;">1</div>
<div class="t" style="left:509.8px;top:146.2px;">Wahlfach</div>
<div class="t" style="left:554.4px;top:146.2px;">1-6</div>
<div class="t" style="left:604.6px;top:146.2px;">1-6</div>
<div class="t" style="left:654.9px;top:146.2px;">Wort</div>
<div style="left:694.2px;top:146.8px;width:13.6px;height:12.4px;background:linear-gradient(#cfe0f8,#8eb4ec);border:1.2px solid #4f6c94;box-sizing:border-box;border-radius:2px"></div>
<svg style="position:absolute;left:697px;top:149px" width="8" height="8" viewBox="0 0 8 8"><path d="M.9 .9l6.2 6.2M7.1 .9l-6.2 6.2" stroke="#f04040" stroke-width="2.2" stroke-linecap="round"/></svg>
<div class="t" style="right:892.5px;top:158.8px;text-align:right;">19</div>
<div class="t" style="left:38.5px;top:158.8px;">Verhalten</div>
<div class="t" style="left:127.6px;top:158.8px;">Verhalten</div>
<div class="t" style="left:296.2px;top:158.8px;"></div>
<div class="t" style="right:547.4px;top:158.8px;text-align:right;">0</div>
<div class="t" style="right:516.8px;top:158.8px;text-align:right;">0</div>
<div class="t" style="right:484.7px;top:158.8px;text-align:right;">0</div>
<div class="t" style="right:454px;top:158.8px;text-align:right;">0</div>
<div class="t" style="right:422.4px;top:158.8px;text-align:right;">0</div>
<div class="t" style="left:509.8px;top:158.8px;">Verhalten</div>
<div class="t" style="left:554.4px;top:158.8px;">1-4</div>
<div class="t" style="left:604.6px;top:158.8px;">1-4</div>
<div class="t" style="left:654.9px;top:158.8px;">Wort</div>
<div style="left:694.2px;top:159.4px;width:13.6px;height:12.4px;background:linear-gradient(#cfe0f8,#8eb4ec);border:1.2px solid #4f6c94;box-sizing:border-box;border-radius:2px"></div>
<svg style="position:absolute;left:697px;top:161.6px" width="8" height="8" viewBox="0 0 8 8"><path d="M.9 .9l6.2 6.2M7.1 .9l-6.2 6.2" stroke="#f04040" stroke-width="2.2" stroke-linecap="round"/></svg>
<div class="t" style="right:892.5px;top:171.4px;text-align:right;">20</div>
<div class="t" style="left:38.5px;top:171.4px;">Mitarbeit</div>
<div class="t" style="left:127.6px;top:171.4px;">Mitarbeit</div>
<div class="t" style="left:296.2px;top:171.4px;"></div>
<div class="t" style="right:547.4px;top:171.4px;text-align:right;">0</div>
<div class="t" style="right:516.8px;top:171.4px;text-align:right;">0</div>
<div class="t" style="right:484.7px;top:171.4px;text-align:right;">0</div>
<div class="t" style="right:454px;top:171.4px;text-align:right;">0</div>
<div class="t" style="right:422.4px;top:171.4px;text-align:right;">0</div>
<div class="t" style="left:509.8px;top:171.4px;">Mitarbeit</div>
<div class="t" style="left:554.4px;top:171.4px;">1-4</div>
<div class="t" style="left:604.6px;top:171.4px;">1-4</div>
<div class="t" style="left:654.9px;top:171.4px;">Wort</div>
<div style="left:694.2px;top:172px;width:13.6px;height:12.4px;background:linear-gradient(#cfe0f8,#8eb4ec);border:1.2px solid #4f6c94;box-sizing:border-box;border-radius:2px"></div>
<svg style="position:absolute;left:697px;top:174.2px" width="8" height="8" viewBox="0 0 8 8"><path d="M.9 .9l6.2 6.2M7.1 .9l-6.2 6.2" stroke="#f04040" stroke-width="2.2" stroke-linecap="round"/></svg>
<div class="t" style="right:892.5px;top:184px;text-align:right;">21</div>
<div class="t" style="left:38.5px;top:184px;">Bemerkungen</div>
<div class="t" style="left:127.6px;top:184px;">Bemerkungen</div>
<div class="t" style="left:296.2px;top:184px;"></div>
<div class="t" style="left:509.8px;top:184px;">Bemerkun...</div>
<div class="t" style="left:554.4px;top:184px;"></div>
<div class="t" style="left:604.6px;top:184px;"></div>
<div class="t" style="left:654.9px;top:184px;"></div>
<div style="left:694.2px;top:184.6px;width:13.6px;height:12.4px;background:linear-gradient(#cfe0f8,#8eb4ec);border:1.2px solid #4f6c94;box-sizing:border-box;border-radius:2px"></div>
<svg style="position:absolute;left:697px;top:186.8px" width="8" height="8" viewBox="0 0 8 8"><path d="M.9 .9l6.2 6.2M7.1 .9l-6.2 6.2" stroke="#f04040" stroke-width="2.2" stroke-linecap="round"/></svg>
<div class="t" style="right:892.5px;top:196.6px;text-align:right;">22</div>
<div class="t" style="left:38.5px;top:196.6px;">versetzt</div>
<div class="t" style="left:127.6px;top:196.6px;">versetzt</div>
<div class="t" style="left:296.2px;top:196.6px;"></div>
<div class="t" style="left:509.8px;top:196.6px;">versetzt</div>
<div class="t" style="left:554.4px;top:196.6px;"></div>
<div class="t" style="left:604.6px;top:196.6px;"></div>
<div class="t" style="left:654.9px;top:196.6px;"></div>
<div style="left:694.2px;top:197.2px;width:13.6px;height:12.4px;background:linear-gradient(#cfe0f8,#8eb4ec);border:1.2px solid #4f6c94;box-sizing:border-box;border-radius:2px"></div>
<svg style="position:absolute;left:697px;top:199.4px" width="8" height="8" viewBox="0 0 8 8"><path d="M.9 .9l6.2 6.2M7.1 .9l-6.2 6.2" stroke="#f04040" stroke-width="2.2" stroke-linecap="round"/></svg>
<div class="t" style="right:892.5px;top:209.2px;text-align:right;">23</div>
<div class="t" style="left:38.5px;top:209.2px;">Lob / Preis</div>
<div class="t" style="left:127.6px;top:209.2px;">Lob / Preis</div>
<div class="t" style="left:296.2px;top:209.2px;"></div>
<div class="t" style="left:509.8px;top:209.2px;">Lob / Preis</div>
<div class="t" style="left:554.4px;top:209.2px;"></div>
<div class="t" style="left:604.6px;top:209.2px;"></div>
<div class="t" style="left:654.9px;top:209.2px;"></div>
<div style="left:694.2px;top:209.8px;width:13.6px;height:12.4px;background:linear-gradient(#cfe0f8,#8eb4ec);border:1.2px solid #4f6c94;box-sizing:border-box;border-radius:2px"></div>
<svg style="position:absolute;left:697px;top:212px" width="8" height="8" viewBox="0 0 8 8"><path d="M.9 .9l6.2 6.2M7.1 .9l-6.2 6.2" stroke="#f04040" stroke-width="2.2" stroke-linecap="round"/></svg>
<div class="t" style="right:892.5px;top:221.8px;text-align:right;">24</div>
<div class="t" style="left:38.5px;top:221.8px;">Durchschnitt 1</div>
<div class="t" style="left:127.6px;top:221.8px;">Durchschnitt 1</div>
<div class="t" style="left:296.2px;top:221.8px;"></div>
<div class="t" style="left:509.8px;top:221.8px;">Durchschn...</div>
<div class="t" style="left:554.4px;top:221.8px;"></div>
<div class="t" style="left:604.6px;top:221.8px;"></div>
<div class="t" style="left:654.9px;top:221.8px;"></div>
<div style="left:694.2px;top:222.4px;width:13.6px;height:12.4px;background:linear-gradient(#cfe0f8,#8eb4ec);border:1.2px solid #4f6c94;box-sizing:border-box;border-radius:2px"></div>
<svg style="position:absolute;left:697px;top:224.6px" width="8" height="8" viewBox="0 0 8 8"><path d="M.9 .9l6.2 6.2M7.1 .9l-6.2 6.2" stroke="#f04040" stroke-width="2.2" stroke-linecap="round"/></svg>
<div class="t" style="right:892.5px;top:234.4px;text-align:right;">25</div>
<div class="t" style="left:38.5px;top:234.4px;">versetztText</div>
<div class="t" style="left:127.6px;top:234.4px;">versetztText</div>
<div class="t" style="left:296.2px;top:234.4px;"></div>
<div class="t" style="left:509.8px;top:234.4px;">versetztText</div>
<div class="t" style="left:554.4px;top:234.4px;"></div>
<div class="t" style="left:604.6px;top:234.4px;"></div>
<div class="t" style="left:654.9px;top:234.4px;"></div>
<div style="left:694.2px;top:235px;width:13.6px;height:12.4px;background:linear-gradient(#cfe0f8,#8eb4ec);border:1.2px solid #4f6c94;box-sizing:border-box;border-radius:2px"></div>
<svg style="position:absolute;left:697px;top:237.2px" width="8" height="8" viewBox="0 0 8 8"><path d="M.9 .9l6.2 6.2M7.1 .9l-6.2 6.2" stroke="#f04040" stroke-width="2.2" stroke-linecap="round"/></svg>
<div class="t" style="right:892.5px;top:247px;text-align:right;">26</div>
<div class="t" style="left:38.5px;top:247px;">Abgang</div>
<div class="t" style="left:127.6px;top:247px;">Abgang</div>
<div class="t" style="left:296.2px;top:247px;"></div>
<div class="t" style="left:509.8px;top:247px;">Abgang</div>
<div class="t" style="left:554.4px;top:247px;"></div>
<div class="t" style="left:604.6px;top:247px;"></div>
<div class="t" style="left:654.9px;top:247px;"></div>
<div style="left:694.2px;top:247.6px;width:13.6px;height:12.4px;background:linear-gradient(#cfe0f8,#8eb4ec);border:1.2px solid #4f6c94;box-sizing:border-box;border-radius:2px"></div>
<svg style="position:absolute;left:697px;top:249.8px" width="8" height="8" viewBox="0 0 8 8"><path d="M.9 .9l6.2 6.2M7.1 .9l-6.2 6.2" stroke="#f04040" stroke-width="2.2" stroke-linecap="round"/></svg>
<div class="t" style="right:892.5px;top:259.6px;text-align:right;">27</div>
<div class="t" style="left:38.5px;top:259.6px;">teilgenommen</div>
<div class="t" style="left:127.6px;top:259.6px;">teilgenommen</div>
<div class="t" style="left:296.2px;top:259.6px;"></div>
<div class="t" style="left:509.8px;top:259.6px;">teilgenom...</div>
<div class="t" style="left:554.4px;top:259.6px;"></div>
<div class="t" style="left:604.6px;top:259.6px;"></div>
<div class="t" style="left:654.9px;top:259.6px;"></div>
<div style="left:694.2px;top:260.2px;width:13.6px;height:12.4px;background:linear-gradient(#cfe0f8,#8eb4ec);border:1.2px solid #4f6c94;box-sizing:border-box;border-radius:2px"></div>
<svg style="position:absolute;left:697px;top:262.4px" width="8" height="8" viewBox="0 0 8 8"><path d="M.9 .9l6.2 6.2M7.1 .9l-6.2 6.2" stroke="#f04040" stroke-width="2.2" stroke-linecap="round"/></svg>
<div style="left:694.2px;top:272.5px;width:13.4px;height:12.6px;background:#fbfbfd;border:1px solid #e0e0e6;box-sizing:border-box"></div>
<svg style="position:absolute;left:696.9px;top:274.8px" width="8" height="8" viewBox="0 0 8 8"><path d="M.9 .9l6.2 6.2M7.1 .9l-6.2 6.2" stroke="#8c8c8c" stroke-width="2.1" stroke-linecap="round"/></svg>
</div>
<div style="left:708.2px;top:293.6px;width:11.8px;height:284px;background:#f6f6fa"></div>
<div style="left:709px;top:294.9px;width:10.7px;height:10.7px;background:linear-gradient(#eef2fb,#b8cbef);border:1px solid #c8d4ec;box-sizing:border-box"></div>
<svg style="position:absolute;left:709.85px;top:296.75px" width="9" height="7" viewBox="0 0 9 7"><path d="M1.5 5l3-3 3 3" fill="none" stroke="#2b4066" stroke-width="1.4"/></svg>
<div style="left:709px;top:566.1px;width:10.6px;height:11.4px;background:linear-gradient(#eef2fb,#b8cbef);border:1px solid #c8d4ec;box-sizing:border-box"></div>
<svg style="position:absolute;left:709.8px;top:568.3px" width="9" height="7" viewBox="0 0 9 7"><path d="M1.5 2.5l3 3 3-3" fill="none" stroke="#2b4066" stroke-width="1.4"/></svg>
<div style="left:709.8px;top:322px;width:8.8px;height:243.6px;background:linear-gradient(90deg,#b6c8ec,#d4e0f8 40%,#c4d4f2);border:1px solid #a8bce0;box-sizing:border-box;border-radius:1px"></div>
<div style="left:712.3px;top:441.8px;width:3.8px;height:4px;background:#e4ecfa"></div>
<div style="left:9.4px;top:325.6px;width:346.2px;height:102.4px;border:2px solid #f01010;box-sizing:border-box;box-shadow:1px 1px 2px rgba(60,60,80,.45), inset 1px 1px 1px rgba(60,90,110,.35)"></div>
<div style="left:9.4px;top:526.9px;width:288px;height:41.1px;border:2px solid #f01010;box-sizing:border-box;box-shadow:1px 1px 2px rgba(60,60,80,.45), inset 1px 1px 1px rgba(60,90,110,.35)"></div>
<div style="left:740px;top:22.2px;width:6px;height:1px;background:#c4c4cc"></div>
<div style="left:740px;top:23.2px;width:6px;height:1px;background:#ffffff"></div>
<div style="left:782px;top:22.2px;width:145px;height:1px;background:#c4c4cc"></div>
<div style="left:782px;top:23.2px;width:145px;height:1px;background:#ffffff"></div>
<div class="t" style="left:747.5px;top:16.2px;">Navigator</div>
<div style="left:739.7px;top:29.3px;width:186.8px;height:1.3px;background:#808088"></div>
<div style="left:739.7px;top:29.3px;width:1.3px;height:30.7px;background:#909098"></div>
<div style="left:741px;top:30.6px;width:172px;height:12.5px;background:#f4f4fc"></div>
<div style="left:741px;top:42.6px;width:172px;height:1px;background:#c8c8d2"></div>
<div style="left:797.4px;top:31.5px;width:1px;height:10.5px;background:#c4c4cc"></div>
<div style="left:855.2px;top:31.5px;width:1px;height:10.5px;background:#c4c4cc"></div>
<div class="t" style="left:740.4px;top:31.1px;">Schul-/Dst....</div>
<svg style="position:absolute;left:786px;top:35.5px" width="6" height="4" viewBox="0 0 6 4"><path d="M0 3.6L3 .4 6 3.6z" fill="#1f3b5a"/></svg>
<div class="t" style="left:792.8px;top:31.1px;">1</div>
<div class="t" style="left:798.2px;top:31.1px;">Zweig</div>
<svg style="position:absolute;left:843px;top:35.5px" width="6" height="4" viewBox="0 0 6 4"><path d="M0 3.6L3 .4 6 3.6z" fill="#1f3b5a"/></svg>
<div class="t" style="left:849.8px;top:31.1px;">2</div>
<div class="t" style="left:855.8px;top:31.1px;">Schule</div>
<div style="left:741px;top:43.5px;width:171.8px;height:12.5px;background:#3f7ff4"></div>
<div style="left:739.7px;top:42.5px;width:1.8px;height:14.5px;background:#c8c8d0"></div>
<div style="left:741.5px;top:45px;width:35.5px;height:9.5px;background:rgba(255,255,255,.12)"></div>
<div style="left:797px;top:45px;width:10px;height:9.5px;background:rgba(255,255,255,.12)"></div>
<div style="left:857px;top:45px;width:35px;height:9.5px;background:rgba(255,255,255,.12)"></div>
<div style="left:744px;top:47.8px;width:21px;height:3.2px;background:rgba(232,238,255,.75);filter:blur(0.6px)"></div>
<div style="left:769px;top:47.8px;width:7px;height:3.2px;background:rgba(232,238,255,.75);filter:blur(0.6px)"></div>
<div style="left:797.5px;top:47.8px;width:6.5px;height:3.2px;background:rgba(232,238,255,.75);filter:blur(0.6px)"></div>
<div style="left:860px;top:47.8px;width:21px;height:3.2px;background:rgba(232,238,255,.75);filter:blur(0.6px)"></div>
<div style="left:884px;top:47.8px;width:7px;height:3.2px;background:rgba(232,238,255,.75);filter:blur(0.6px)"></div>
<div style="left:797px;top:43.5px;width:1px;height:12.5px;background:rgba(255,255,255,.25)"></div>
<div style="left:855px;top:43.5px;width:1px;height:12.5px;background:rgba(255,255,255,.25)"></div>
<div style="left:741px;top:56px;width:172px;height:4px;background:#ececf4"></div>
<div style="left:914.3px;top:30.2px;width:11.3px;height:13.2px;background:linear-gradient(#ffffff,#e4e8f0);border:1.2px solid #5c7ca8;box-sizing:border-box;border-radius:2px"></div>
<svg style="position:absolute;left:915.95px;top:32.5px" width="8" height="8" viewBox="0 0 8 8"><rect x=".6" y=".4" width="6.8" height="2" fill="#111"/><rect x="2.5" y=".4" width=".6" height="2" fill="#eee"/><rect x="4.9" y=".4" width=".6" height="2" fill="#eee"/><rect x=".6" y=".4" width="1.4" height="6" fill="#111"/><rect x="6" y=".4" width="1.4" height="3.6" fill="#111"/><path d="M2.8 4h5L5.3 7z" fill="#111"/></svg>
<svg style="position:absolute;left:916px;top:46px" width="9" height="5" viewBox="0 0 9 5"><path d="M1 4.2l3.5-3 3.5 3" fill="none" stroke="#d8d8e0" stroke-width="1.2"/></svg>
<svg style="position:absolute;left:916px;top:52.5px" width="9" height="5" viewBox="0 0 9 5"><path d="M1 1l3.5 3 3.5-3" fill="none" stroke="#d8d8e0" stroke-width="1.2"/></svg>
<div style="left:739.7px;top:65px;width:187.3px;height:1.3px;background:#808088"></div>
<div style="left:739.7px;top:65px;width:1.3px;height:158.2px;background:#909098"></div>
<div style="left:741px;top:66.3px;width:172px;height:12.5px;background:#f4f4fc"></div>
<div style="left:741px;top:78.2px;width:172px;height:1px;background:#c8c8d2"></div>
<div class="t" style="left:740.4px;top:67px;">Zeugnisart (Anzeigeform)</div>
<div style="left:913.5px;top:66.2px;width:12.3px;height:13.4px;background:linear-gradient(#ffffff,#e4e8f0);border:1.2px solid #5c7ca8;box-sizing:border-box;border-radius:2px"></div>
<svg style="position:absolute;left:915.65px;top:68.6px" width="8" height="8" viewBox="0 0 8 8"><rect x=".6" y=".4" width="6.8" height="2" fill="#111"/><rect x="2.5" y=".4" width=".6" height="2" fill="#eee"/><rect x="4.9" y=".4" width=".6" height="2" fill="#eee"/><rect x=".6" y=".4" width="1.4" height="6" fill="#111"/><rect x="6" y=".4" width="1.4" height="3.6" fill="#111"/><path d="M2.8 4h5L5.3 7z" fill="#111"/></svg>
<div style="left:0;top:78.8px;width:930px;height:144.4px;overflow:hidden">
<div style="left:741px;top:0.3px;width:172px;height:12.6px;background:#e7e7ef"></div>
<div class="t" style="left:740.6px;top:0.4px;">Halbjahresinformation</div>
<div style="left:741px;top:12.9px;width:172px;height:12.6px;background:#d9e2f5"></div>
<div class="t" style="left:740.6px;top:13px;">Halbjahreszeugnis</div>
<div style="left:741px;top:25.5px;width:172px;height:12.6px;background:#e7e7ef"></div>
<div class="t" style="left:740.6px;top:25.6px;">Kurszeugnis 1.1</div>
<div style="left:741px;top:38.1px;width:172px;height:12.6px;background:#d9e2f5"></div>
<div class="t" style="left:740.6px;top:38.2px;">Kurszeugnis 1.2</div>
<div style="left:741px;top:50.7px;width:172px;height:12.6px;background:#e7e7ef"></div>
<div class="t" style="left:740.6px;top:50.8px;">Kurszeugnis 2.1</div>
<div style="left:741px;top:63.3px;width:172px;height:12.6px;background:#d9e2f5"></div>
<div class="t" style="left:740.6px;top:63.4px;">Kurszeugnis 2.2</div>
<div style="left:741px;top:75.9px;width:172px;height:12.6px;background:#3f7ff4"></div>
<div class="t" style="left:740.6px;top:76px;color:#fff;-webkit-text-stroke:0.15px #fff">Jahreszeugnis</div>
<div style="left:741px;top:88.5px;width:172px;height:12.6px;background:#d9e2f5"></div>
<div class="t" style="left:740.6px;top:88.6px;">Abschlusszeugnis</div>
<div style="left:741px;top:101.1px;width:172px;height:12.6px;background:#e7e7ef"></div>
<div class="t" style="left:740.6px;top:101.2px;">Abgangszeugnis</div>
<div style="left:741px;top:113.7px;width:172px;height:12.6px;background:#d9e2f5"></div>
<div class="t" style="left:740.6px;top:113.8px;">Zertifikat</div>
<div style="left:741px;top:126.3px;width:172px;height:12.6px;background:#e7e7ef"></div>
<div class="t" style="left:740.6px;top:126.4px;">Fachhochschulreife</div>
<div style="left:741px;top:138.9px;width:172px;height:12.6px;background:#d9e2f5"></div>
<div class="t" style="left:740.6px;top:139px;">Prüfungsbeiblatt</div>
</div>
<div style="left:914px;top:80.5px;width:11.6px;height:142.5px;background:#f8f8fc"></div>
<div style="left:914.4px;top:80.8px;width:10.8px;height:10.4px;background:linear-gradient(#eef2fb,#b8cbef);border:1px solid #c8d4ec;box-sizing:border-box"></div>
<svg style="position:absolute;left:915.3px;top:82.5px" width="9" height="7" viewBox="0 0 9 7"><path d="M1.5 5l3-3 3 3" fill="none" stroke="#2b4066" stroke-width="1.4"/></svg>
<div style="left:914.4px;top:211px;width:11px;height:11.4px;background:linear-gradient(#eef2fb,#b8cbef);border:1px solid #c8d4ec;box-sizing:border-box"></div>
<svg style="position:absolute;left:915.4px;top:213.2px" width="9" height="7" viewBox="0 0 9 7"><path d="M1.5 2.5l3 3 3-3" fill="none" stroke="#2b4066" stroke-width="1.4"/></svg>
<div style="left:914.4px;top:92.6px;width:11.2px;height:62.8px;background:linear-gradient(90deg,#b6c8ec,#d4e0f8 40%,#c4d4f2);border:1px solid #a8bce0;box-sizing:border-box;border-radius:1px"></div>
<div style="left:916.9px;top:122px;width:6.2px;height:4px;background:#e4ecfa"></div>
<div style="left:738.2px;top:152.1px;width:99.3px;height:17.9px;border:2px solid #f01010;box-sizing:border-box;box-shadow:1px 1px 2px rgba(60,60,80,.45), inset 1px 1px 1px rgba(60,90,110,.35)"></div>
<div style="left:740px;top:232px;width:187px;height:1.2px;background:#a8a8b0"></div>
<div style="left:739.2px;top:234.3px;width:63.6px;height:16.3px;background:linear-gradient(#ffffff,#e8e8f0 60%,#d8dae4);border:1.2px solid #6c84a8;box-sizing:border-box;border-radius:3px"></div>
<div class="t" style="left:671px;width:200px;top:236.35px;text-align:center;">Filter</div>
<div style="left:807.4px;top:238.5px;width:9.4px;height:8.7px;background:#f8f8fa;border:1px solid #d4d4dc;box-sizing:border-box"></div>
<div style="left:739.2px;top:257.2px;width:63.6px;height:16.4px;background:linear-gradient(#ffffff,#e8e8f0 60%,#d8dae4);border:1.2px solid #6c84a8;box-sizing:border-box;border-radius:3px"></div>
<div class="t" style="left:671px;width:200px;top:259.3px;text-align:center;">Suche</div>
<div style="left:807.4px;top:261.4px;width:9.4px;height:8.8px;background:#f8f8fa;border:1px solid #d4d4dc;box-sizing:border-box"></div>
<div style="left:739.7px;top:280.5px;width:187.3px;height:1.3px;background:#808088"></div>
<div style="left:739.7px;top:280.5px;width:1.3px;height:276.5px;background:#909098"></div>
<div style="left:741px;top:281.8px;width:172.4px;height:13px;background:#f4f4fc"></div>
<div style="left:741px;top:294.2px;width:172.4px;height:1px;background:#c8c8d2"></div>
<div class="t" style="left:740.2px;top:282.3px;">Bezeichnung</div>
<svg style="position:absolute;left:905px;top:286.8px" width="6.5" height="3.6" viewBox="0 0 6.5 3.6"><path d="M0 3.4L3.25 .2 6.5 3.4z" fill="#1f3b5a"/></svg>
<div style="left:914.1px;top:281.5px;width:11.7px;height:14px;background:linear-gradient(#ffffff,#e4e8f0);border:1.2px solid #5c7ca8;box-sizing:border-box;border-radius:2px"></div>
<svg style="position:absolute;left:915.95px;top:284.2px" width="8" height="8" viewBox="0 0 8 8"><rect x=".6" y=".4" width="6.8" height="2" fill="#111"/><rect x="2.5" y=".4" width=".6" height="2" fill="#eee"/><rect x="4.9" y=".4" width=".6" height="2" fill="#eee"/><rect x=".6" y=".4" width="1.4" height="6" fill="#111"/><rect x="6" y=".4" width="1.4" height="3.6" fill="#111"/><path d="M2.8 4h5L5.3 7z" fill="#111"/></svg>
<div style="left:0;top:294.8px;width:930px;height:262.2px;overflow:hidden">
<div style="left:741px;top:-2.8px;width:172.4px;height:12.6px;background:#c9d8f3"></div>
<div class="t" style="left:740.6px;top:-2.7px;">3BKGD</div>
<div style="left:741px;top:9.8px;width:172.4px;height:12.6px;background:#e7e7ef"></div>
<div class="t" style="left:740.6px;top:9.9px;">3BKM-MTR</div>
<div style="left:741px;top:22.4px;width:172.4px;height:12.6px;background:#c9d8f3"></div>
<div class="t" style="left:740.6px;top:22.5px;">3BKWA</div>
<div style="left:741px;top:35px;width:172.4px;height:12.6px;background:#e7e7ef"></div>
<div class="t" style="left:740.6px;top:35.1px;">3maldrittewl</div>
<div style="left:741px;top:47.6px;width:172.4px;height:12.6px;background:#c9d8f3"></div>
<div class="t" style="left:740.6px;top:47.7px;">6ESG</div>
<div style="left:741px;top:60.2px;width:172.4px;height:12.6px;background:#e7e7ef"></div>
<div class="t" style="left:740.6px;top:60.3px;">BFA</div>
<div style="left:741px;top:72.8px;width:172.4px;height:12.6px;background:#c9d8f3"></div>
<div class="t" style="left:740.6px;top:72.9px;">BFP-Drittelzeugnis_1-2</div>
<div style="left:741px;top:85.4px;width:172.4px;height:12.6px;background:#e7e7ef"></div>
<div class="t" style="left:740.6px;top:85.5px;">BFP-Drittelzeugnis_3</div>
<div style="left:741px;top:98px;width:172.4px;height:12.6px;background:#c9d8f3"></div>
<div class="t" style="left:740.6px;top:98.1px;">BFSAIT</div>
<div style="left:741px;top:110.6px;width:172.4px;height:12.6px;background:#e7e7ef"></div>
<div class="t" style="left:740.6px;top:110.7px;">BFSAIT2021</div>
<div style="left:741px;top:123.2px;width:172.4px;height:12.6px;background:#c9d8f3"></div>
<div class="t" style="left:740.6px;top:123.3px;">BKSPIL</div>
<div style="left:741px;top:135.8px;width:172.4px;height:12.6px;background:#e7e7ef"></div>
<div class="t" style="left:740.6px;top:135.9px;">FBW</div>
<div style="left:741px;top:148.4px;width:172.4px;height:12.6px;background:#c9d8f3"></div>
<div class="t" style="left:740.6px;top:148.5px;">FPLTGT</div>
<div style="left:741px;top:161px;width:172.4px;height:12.6px;background:#e7e7ef"></div>
<div class="t" style="left:740.6px;top:161.1px;">FTA</div>
<div style="left:741px;top:173.6px;width:172.4px;height:12.6px;background:#c9d8f3"></div>
<div class="t" style="left:740.6px;top:173.7px;">FTB</div>
<div style="left:741px;top:186.2px;width:172.4px;height:12.6px;background:#e7e7ef"></div>
<div class="t" style="left:740.6px;top:186.3px;">FTTXT</div>
<div style="left:741px;top:198.8px;width:172.4px;height:12.6px;background:#c9d8f3"></div>
<div class="t" style="left:740.6px;top:198.9px;">JZ_W2KE2</div>
<div style="left:741px;top:211.4px;width:172.4px;height:12.6px;background:#e7e7ef"></div>
<div class="t" style="left:740.6px;top:211.5px;">JZ_W2KE2_gestreckt</div>
<div style="left:741px;top:224px;width:172.4px;height:12.6px;background:#c9d8f3"></div>
<div class="t" style="left:740.6px;top:224.1px;">W2KEHIZ</div>
<div style="left:741px;top:236.6px;width:172.4px;height:12.6px;background:#e7e7ef"></div>
<div class="t" style="left:740.6px;top:236.7px;">WFHR</div>
<div style="left:741px;top:249.2px;width:172.4px;height:12.6px;background:#3f7ff4"></div>
<div class="t" style="left:740.6px;top:249.3px;color:#fff;-webkit-text-stroke:0.15px #fff">2BFSA</div>
</div>
<div style="left:914px;top:295.5px;width:12.4px;height:261.5px;background:#f8f8fc"></div>
<div style="left:914.7px;top:296.1px;width:10.7px;height:10.4px;background:linear-gradient(#eef2fb,#b8cbef);border:1px solid #c8d4ec;box-sizing:border-box"></div>
<svg style="position:absolute;left:915.55px;top:297.8px" width="9" height="7" viewBox="0 0 9 7"><path d="M1.5 5l3-3 3 3" fill="none" stroke="#2b4066" stroke-width="1.4"/></svg>
<div style="left:914.7px;top:544.6px;width:10.7px;height:12px;background:linear-gradient(#eef2fb,#b8cbef);border:1px solid #c8d4ec;box-sizing:border-box"></div>
<svg style="position:absolute;left:915.55px;top:547.1px" width="9" height="7" viewBox="0 0 9 7"><path d="M1.5 2.5l3 3 3-3" fill="none" stroke="#2b4066" stroke-width="1.4"/></svg>
<div style="left:915.2px;top:391.7px;width:10.8px;height:152.6px;background:linear-gradient(90deg,#b6c8ec,#d4e0f8 40%,#c4d4f2);border:1px solid #a8bce0;box-sizing:border-box;border-radius:1px"></div>
<div style="left:917.7px;top:466px;width:5.8px;height:4px;background:#e4ecfa"></div>
<div class="t" style="left:815px;top:557.5px;">Anzahl: 32</div>
<div style="left:740px;top:569.6px;width:187px;height:1px;background:#e0e0ea"></div>
<div style="left:740px;top:570.6px;width:187px;height:1px;background:#ffffff"></div>
<svg style="position:absolute;left:785.5px;top:574px" width="8" height="9" viewBox="0 0 8 9"><rect x=".5" y="0" width="2" height="8.5" fill="#3f78d0"/><path d="M7.5 0v8.5L2.5 4.25z" fill="#3f78d0"/></svg>
<svg style="position:absolute;left:798.7px;top:574px" width="10.5" height="9" viewBox="0 0 10.5 9"><path d="M5 0v8.5L0 4.25z M10 0v8.5L5 4.25z" fill="#3f78d0"/></svg>
<svg style="position:absolute;left:815.5px;top:574px" width="6" height="9" viewBox="0 0 6 9"><path d="M5.5 0v8.5L0 4.25z" fill="#3f78d0"/></svg>
<svg style="position:absolute;left:830px;top:574px" width="6" height="9" viewBox="0 0 6 9"><path d="M.5 0v8.5L6 4.25z" fill="#9a9a9a"/></svg>
<svg style="position:absolute;left:843px;top:574px" width="10.5" height="9" viewBox="0 0 10.5 9"><path d="M0 0v8.5L5 4.25z M5 0v8.5l5-4.25z" fill="#9a9a9a"/></svg>
<svg style="position:absolute;left:859.4px;top:574px" width="8" height="9" viewBox="0 0 8 9"><path d="M0 0v8.5L5 4.25z" fill="#9a9a9a"/><rect x="5" y="0" width="2.2" height="8.5" fill="#9a9a9a"/></svg>
<svg style="position:absolute;left:871.8px;top:573px" width="12" height="11" viewBox="0 0 12 11"><path d="M1.5 5.2C2 2.5 5 1.2 7.5 2.4" fill="none" stroke="#4aa84a" stroke-width="2"/><path d="M6.5 0.2l4 2.2-3.6 2z" fill="#4aa84a"/><path d="M10.2 5.6C9.8 8.4 6.8 9.8 4.2 8.6" fill="none" stroke="#4aa84a" stroke-width="2"/><path d="M5.2 10.8l-4-2.2 3.6-2z" fill="#4aa84a"/></svg>
<div style="left:927px;top:17px;width:1px;height:569px;background:#e4e4ee"></div>
</body></html>
